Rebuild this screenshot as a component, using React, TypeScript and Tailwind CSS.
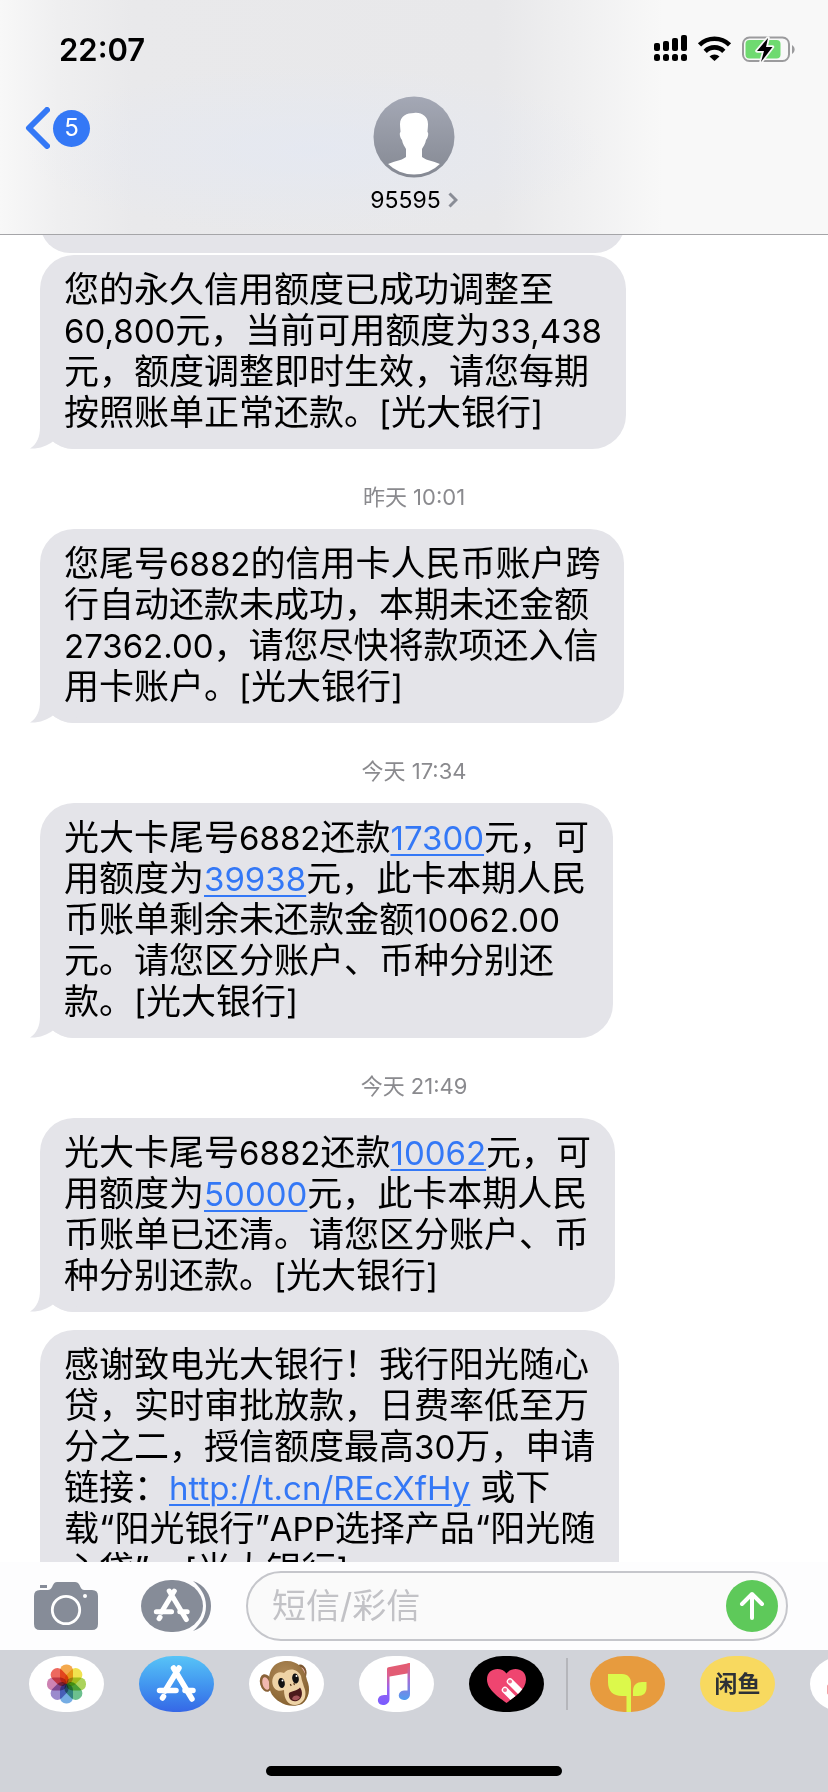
import React from "react";

type Message = { id: string; time?: string; tail?: boolean; gap: string; lines: React.ReactNode[] };

/* Latin letters and digits are set slightly smaller than the Chinese text around them. */
const mixed = (text: string) =>
  text.split(/([\x21-\x7e]+)/).map((part, i) =>
    i % 2 ? <span key={i} className="text-[33px] leading-none">{part}</span> : part,
  );

const L = ({ href, children }: { href: string; children: string }) => (
  <a href={href} className="text-[33px] leading-none text-[#3478f6] underline decoration-2 underline-offset-4">{children}</a>
);

const messages: Message[] = [
  {
    id: "limit",
    tail: true,
    gap: "mt-0.5",
    lines: ["您的永久信用额度已成功调整至", "60,800元，当前可用额度为33,438", "元，额度调整即时生效，请您每期", "按照账单正常还款。[光大银行]"],
  },
  {
    id: "failed",
    time: "昨天 10:01",
    tail: true,
    gap: "",
    lines: ["您尾号6882的信用卡人民币账户跨", "行自动还款未成功，本期未还金额", "27362.00，请您尽快将款项还入信", "用卡账户。[光大银行]"],
  },
  {
    id: "partial",
    time: "今天 17:34",
    tail: true,
    gap: "",
    lines: [
      <>{mixed("光大卡尾号6882还款")}<L href="#17300">17300</L>元，可</>,
      <>用额度为<L href="#39938">39938</L>元，此卡本期人民</>,
      "币账单剩余未还款金额10062.00",
      "元。请您区分账户、币种分别还",
      "款。[光大银行]",
    ],
  },
  {
    id: "cleared",
    time: "今天 21:49",
    tail: true,
    gap: "",
    lines: [
      <>{mixed("光大卡尾号6882还款")}<L href="#10062">10062</L>元，可</>,
      <>用额度为<L href="#50000">50000</L>元，此卡本期人民</>,
      "币账单已还清。请您区分账户、币",
      "种分别还款。[光大银行]",
    ],
  },
  {
    id: "promo",
    gap: "mt-[18px]",
    lines: [
      "感谢致电光大银行！我行阳光随心",
      "贷，实时审批放款，日费率低至万",
      "分之二，授信额度最高30万，申请",
      <>链接：<L href="http://t.cn/REcXfHy">http://t.cn/REcXfHy</L> 或下</>,
      "载“阳光银行”APP选择产品“阳光随",
      "心贷”。[光大银行]",
    ],
  },
];

function Bubble({ m }: { m: Message }) {
  return (
    <>
      {m.time && (
        <time className="flex h-20 shrink-0 items-center justify-center pt-4 text-[22px] leading-6 text-[#8a8a8e]">{m.time}</time>
      )}
      <div className={`relative ml-10 w-fit shrink-0 rounded-[34px] bg-[#e4e4e9] px-6 pt-3.5 pb-4 text-[35px] leading-[41px] whitespace-nowrap text-black ${m.gap}`}>
        {m.tail && (
          <svg className="absolute bottom-0 -left-2.5" width="50" height="36" viewBox="0 0 50 36" fill="#e4e4e9" aria-hidden="true">
            <path d="M10 0V14C10 24 7 31 0 35.500C9 36 17 33 23 28.500C30 33.500 38 36 46 36L50 0Z" />
          </svg>
        )}
        <p className="relative">
          {m.lines.map((line, i) => (
            <React.Fragment key={i}>
              {typeof line === "string" ? mixed(line) : line}
              {i < m.lines.length - 1 && <br />}
            </React.Fragment>
          ))}
        </p>
      </div>
    </>
  );
}

function StatusIcons() {
  return (
    <svg width="144" height="30" viewBox="0 0 144 30" aria-label="信号、无线网络、充电中" role="img">
      <g fill="#000">
        <rect x="3" y="10" width="6" height="8" rx="2" />
        <rect x="12" y="8" width="6" height="10" rx="2" />
        <rect x="21" y="5" width="6" height="13" rx="2" />
        <rect x="30" y="2" width="6" height="16" rx="2" />
        <rect x="3" y="21" width="6" height="7" rx="2.500" />
        <rect x="12" y="21" width="6" height="7" rx="2.500" />
        <rect x="21" y="21" width="6" height="7" rx="2.500" />
        <rect x="30" y="21" width="6" height="7" rx="2.500" />
        <path d="M63.500 28L58.500 23.500A7.500 7.500 0 0 1 68.500 23.500Z" />
      </g>
      <g fill="none" stroke="#000" strokeWidth="4.600">
        <path d="M48.500 11.800A21.500 21.500 0 0 1 78.500 11.800" />
        <path d="M54.200 18.300A13 13 0 0 1 72.800 18.300" />
      </g>
      <rect x="92" y="4.500" width="46" height="23.500" rx="6.500" fill="none" stroke="#9b9b9d" strokeWidth="2" />
      <path d="M141 12C144.500 14 144.500 19 141 21Z" fill="#9b9b9d" />
      <rect x="94.500" y="7" width="35" height="18.500" rx="4" fill="#6fda70" />
      <path d="M117 5L106 18H113L110 29L121.500 14H115Z" fill="#000" stroke="#f8f8f8" strokeWidth="3.500" paintOrder="stroke" strokeLinejoin="round" />
    </svg>
  );
}

const StoreMark = () => (
  <g fill="none" stroke="#fff" strokeWidth="5.500" strokeLinecap="round">
    <path d="M40 12L26 35M34.500 12L53 43" />
    <path d="M20.500 34.500H37M46 34.500H54" />
    <path d="M24.500 40.500L23.500 42" />
  </g>
);

function PhotosIcon() {
  const petals = ["#f39a2e", "#eedd30", "#9ccc3f", "#52b57a", "#5d9fe0", "#8a77c4", "#c56ca4", "#ea4f43"];
  return (
    <svg viewBox="0 0 75 56" className="size-full">
      {petals.map((c, i) => (
        <rect key={c} x="31" y="8.500" width="13" height="19.500" rx="6" fill={c} opacity="0.850" transform={`rotate(${i * 45} 37.500 28)`} className="mix-blend-multiply" />
      ))}
    </svg>
  );
}

const StoreIcon = () => <svg viewBox="0 0 75 56" className="size-full"><StoreMark /></svg>;

const MonkeyIcon = () => (
  <svg viewBox="0 0 75 56" className="size-full">
    <defs>
      <radialGradient id="fur" cx="0.400" cy="0.300" r="0.750">
        <stop offset="0" stopColor="#b08a58" /><stop offset="1" stopColor="#84602f" />
      </radialGradient>
    </defs>
    <ellipse cx="17" cy="27" rx="6" ry="9" fill="#8a6238" transform="rotate(-15 17 27)" />
    <ellipse cx="17" cy="27.500" rx="3.500" ry="6.500" fill="#f1b8b0" transform="rotate(-15 17 27.500)" />
    <ellipse cx="52" cy="16" rx="5.500" ry="7.500" fill="#7b5630" transform="rotate(-15 52 16)" />
    <ellipse cx="53" cy="16.500" rx="3" ry="5" fill="#f1b8b0" transform="rotate(-15 53 16.500)" />
    <path d="M20 27C19 11 28 5 38 5C49 5 56 13 58 24C62 33 60 43 53 48C46 51 36 50 31 46C24 42 20 36 20 27Z" fill="url(#fur)" />
    <path d="M23.500 28C22 20 28 14 35 17C40 11 49 13 52 20C53 26 54 27 55 31C58 37 57 48 46 49C39 49 35 43 35 34C29 36 25 34 23.500 28Z" fill="#eed3a6" />
    <ellipse cx="32.500" cy="27" rx="3.300" ry="5" fill="#111" transform="rotate(-10 32.500 27)" />
    <ellipse cx="46.500" cy="22.500" rx="3.300" ry="5" fill="#111" transform="rotate(-10 46.500 22.500)" />
    <circle cx="33.500" cy="24.500" r="1" fill="#fff" />
    <circle cx="47.500" cy="20" r="1" fill="#fff" />
    <path d="M41.500 28.500L42 29.500M45 27.500L45.300 28.500" stroke="#5c3b1d" strokeWidth="1.300" strokeLinecap="round" />
    <path d="M40 37C43 35 48 35 51 31.500C54 35 54 43 48 45C42 46.500 39 42 40 37Z" fill="#4c1a1c" />
    <path d="M43 43C44 39 49 38.500 51 41.500C49 44.500 46 45 43 43Z" fill="#a4555a" />
  </svg>
);

const MusicIcon = () => (
  <svg viewBox="0 0 75 56" className="size-full">
    <defs>
      <linearGradient id="note" x1="0" y1="8" x2="0" y2="48" gradientUnits="userSpaceOnUse">
        <stop offset="0" stopColor="#ee5a68" /><stop offset="0.300" stopColor="#d8609a" /><stop offset="0.600" stopColor="#9a63f0" /><stop offset="1" stopColor="#7a5cff" />
      </linearGradient>
      <linearGradient id="noteRight" x1="0" y1="8" x2="0" y2="44" gradientUnits="userSpaceOnUse">
        <stop offset="0" stopColor="#ee5a68" /><stop offset="0.450" stopColor="#a070d8" /><stop offset="1" stopColor="#4f9df0" />
      </linearGradient>
    </defs>
    <path d="M28 13Q28 11.500 29.500 11.200L51 7V17L28 21Z" fill="#e25c74" />
    <path d="M28 13H30.500V43C30.500 47 27 49 24 49C17 49 17 39 25 39H28Z" fill="url(#note)" />
    <path d="M48.500 7.500L51 7V38C51 42 48 44 45 44C38 44 38 35 45 34.500H48.500Z" fill="url(#noteRight)" />
  </svg>
);

const HeartIcon = () => (
  <svg viewBox="0 0 75 56" className="size-full">
    <defs>
      <clipPath id="heart"><path d="M37.500 47C31 42 18 34 18 23.500C18 12 32 10 37.500 17.500C43 10 57 12 57 23.500C57 34 44 42 37.500 47Z" /></clipPath>
    </defs>
    <g clipPath="url(#heart)">
      <rect width="75" height="56" fill="#ef4570" />
      <path d="M41 25.500L54 38.500M36 34L49 47" stroke="#fff" strokeWidth="6.500" strokeLinecap="round" />
      <circle cx="41" cy="25.500" r="2" fill="#ef6a8c" />
      <circle cx="36" cy="34" r="2" fill="#ef6a8c" />
    </g>
  </svg>
);

const SproutIcon = () => (
  <svg viewBox="0 0 75 56" className="size-full" fill="#dcf94b">
    <path d="M18 18H32C38 18 41 22 41 27V56H36.500V40H32C23 40 18 35 18 26Z" />
    <path d="M56.500 26V32C56.500 37 53 40 48 40H43V35C43 29 47 26 52 26Z" />
  </svg>
);

const MoreIcon = () => (
  <svg viewBox="0 0 75 56" className="size-full" fill="#e5484d">
    <rect x="17.500" y="28" width="14" height="11" rx="2" />
    <circle cx="19.500" cy="20.500" r="1.500" />
  </svg>
);

const appBase = "flex h-14 w-[75px] shrink-0 items-center justify-center overflow-hidden rounded-[34px/28px]";

export default function App() {
  return (
    <div className="flex h-screen flex-col overflow-hidden bg-white font-['Inter','Noto_Sans_CJK_SC',sans-serif] text-black">
      <header className="shrink-0 border-b border-[#a5a5a8] bg-[radial-gradient(ellipse_at_38%_64%,#e3e8f4aa_0,#e8e8ea00_40%),linear-gradient(to_right,#f8f8f8_0,#efeff0_7%,#e9e9eb_16%,#e8e8ea_60%,#efeff0_69%,#f8f8f8_80%)]">
        <div className="flex h-24 items-center justify-between pr-[33px] pl-[59px]">
          <span className="pt-1 text-[31px] font-semibold">22:07</span>
          <StatusIcons />
        </div>
        <div className="grid h-[138px] grid-cols-3 items-start">
          <button className="flex items-center gap-[3px] pt-[11px] pl-[25px]" aria-label="返回，5 条未读">
            <svg width="25" height="42" viewBox="0 0 25 42" fill="none" stroke="#3478f6" strokeWidth="6" strokeLinecap="round" strokeLinejoin="round">
              <path d="M22 3L4 21L22 39" />
            </svg>
            <span className="flex size-[37px] items-center justify-center rounded-full bg-[#3478f6] text-2xl text-white">5</span>
          </button>
          <button className="flex flex-col items-center gap-2">
            <svg width="82" height="82" viewBox="0 0 82 82" aria-hidden="true">
              <defs>
                <linearGradient id="avatar" x1="0" y1="0" x2="0" y2="1">
                  <stop offset="0" stopColor="#a4a8b5" /><stop offset="1" stopColor="#858993" />
                </linearGradient>
                <clipPath id="face"><circle cx="41" cy="41" r="37.500" /></clipPath>
              </defs>
              <circle cx="41" cy="41" r="40.500" fill="url(#avatar)" />
              <path clipPath="url(#face)" d="M41 17C48 16 55 20 55 28C55 31 54.500 34 54.500 36C56 37 55 42 53 44C52.500 48 50 51 49 53V61C54 65 62 65 69 69V82H13V69C20 65 28 65 33 61V53C32 51 29.500 48 29 44C27 42 26 37 27.500 36C27.500 34 27 31 27 28C27 20 34 17 41 17Z" fill="#fff" />
            </svg>
            <span className="flex items-center gap-[7px] text-[23px] leading-7">
              95595
              <svg width="10" height="16" viewBox="0 0 10 16" fill="none" stroke="#8a8d96" strokeWidth="3"><path d="M1.500 1.500L8 8L1.500 14.500" /></svg>
            </span>
          </button>
        </div>
      </header>

      <main className="flex min-h-0 flex-1 flex-col overflow-hidden">
        <div className="-mt-[42px] ml-10 h-[60px] w-[585px] shrink-0 rounded-[34px] bg-[#e4e4e9]" />
        {messages.map((m) => <Bubble key={m.id} m={m} />)}
      </main>

      <form className="flex h-[88px] shrink-0 items-center bg-[#fdfdfe] pr-10 pl-[34px]" onSubmit={(e) => e.preventDefault()}>
        <button type="button" aria-label="相机">
          <svg width="64" height="48" viewBox="0 0 64 48">
            <path d="M6 3H13V6H6Z" fill="#868c98" />
            <path d="M6 8H14C17 8 18 5 19 3C20 1 21 0 23 0H41C43 0 44.500 1 45.500 3C46.500 5 47.500 8 50 8H58Q64 8 64 14V42Q64 48 58 48H6Q0 48 0 42V14Q0 8 6 8Z" fill="#868c98" />
            <circle cx="32" cy="28" r="13.700" fill="none" stroke="#fff" strokeWidth="2.800" />
            <circle cx="51" cy="14" r="2" fill="#fff" />
          </svg>
        </button>
        <button type="button" aria-label="应用" className="ml-[43px]">
          <svg width="70" height="52" viewBox="0 0 70 52">
            <path d="M52 1C64 5 70 15 70 26S64 47 52 51C59 45 65 37 65 26S59 7 52 1Z" fill="#868c98" />
            <rect width="62" height="52" rx="30" ry="26" fill="#868c98" />
            <g transform="translate(-3.500 0) scale(0.920)"><StoreMark /></g>
          </svg>
        </button>
        <label className="ml-[35px] flex h-[70px] min-w-0 flex-1 items-center rounded-full border-2 border-[#c5c6cb] bg-[#fafafa] pr-2 pl-6">
          <span className="sr-only">短信/彩信</span>
          <input className="h-[54px] min-w-0 flex-1 bg-transparent text-[34px] leading-[54px] outline-none placeholder:text-[#c2c2c6]" placeholder="短信/彩信" />
          <button type="submit" aria-label="发送" className="flex size-[52px] shrink-0 items-center justify-center rounded-full bg-[#5ec95a]">
            <svg width="26" height="30" viewBox="0 0 26 30" fill="none" stroke="#fff" strokeWidth="4" strokeLinecap="round" strokeLinejoin="round">
              <path d="M13 27V3M3 13L13 3L23 13" />
            </svg>
          </button>
        </label>
      </form>

      <footer className="flex h-[142px] shrink-0 flex-col items-center justify-between bg-[#d1d3d9] pt-1.5 pb-4">
        <nav className="flex w-full items-center gap-[35px] overflow-hidden pl-[29px]">
          <button aria-label="照片" className={`${appBase} bg-white`}><PhotosIcon /></button>
          <button aria-label="商店" className={`${appBase} bg-linear-to-b from-[#58c4f7] to-[#3667e6]`}><StoreIcon /></button>
          <button aria-label="拟我表情" className={`${appBase} bg-white`}><MonkeyIcon /></button>
          <button aria-label="音乐" className={`${appBase} bg-white`}><MusicIcon /></button>
          <div className="flex shrink-0 items-center gap-[22px]">
            <button aria-label="轻点" className={`${appBase} bg-black`}><HeartIcon /></button>
            <span className="h-[52px] w-0.5 bg-[#b5b6bb]" />
            <button aria-label="新芽" className={`${appBase} bg-[#e79b3e]`}><SproutIcon /></button>
          </div>
          <button className={`${appBase} bg-[#f8d95f] text-[23px] font-bold text-[#2d3136]`}>闲鱼</button>
          <button aria-label="更多" className={`${appBase} bg-white`}><MoreIcon /></button>
        </nav>
        <div className="h-2.5 w-[296px] rounded-full bg-black" />
      </footer>
    </div>
  );
}
